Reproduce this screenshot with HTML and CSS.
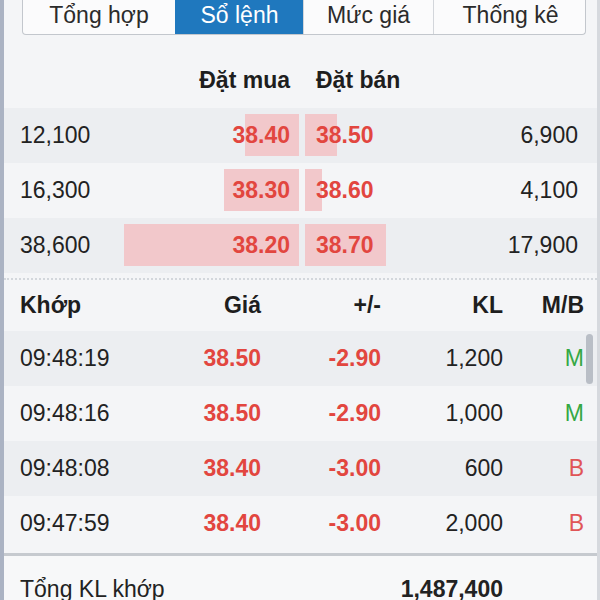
FILE: index.html
```html
<!DOCTYPE html>
<html lang="vi">
<head>
    <meta charset="UTF-8">
    <meta name="viewport" content="width=device-width, initial-scale=1.0">
    <title>Sổ lệnh</title>
    <link rel="stylesheet" href="styles.css">
</head>
<body>
    <div class="panel">
        <div class="tabs">
            <div class="tab">Tổng hợp</div>
            <div class="tab active">Sổ lệnh</div>
            <div class="tab">Mức giá</div>
            <div class="tab">Thống kê</div>
        </div>

        <div class="book">
            <div class="book-row book-head">
                <span></span>
                <span class="bid">Đặt mua</span>
                <span class="ask">Đặt bán</span>
                <span></span>
            </div>
            <div class="book-row odd">
                <span class="vol">12,100</span>
                <span class="bid bar" style="--w:54px">38.40</span>
                <span class="ask bar" style="--w:32px">38.50</span>
                <span class="vol right">6,900</span>
            </div>
            <div class="book-row">
                <span class="vol">16,300</span>
                <span class="bid bar" style="--w:75px">38.30</span>
                <span class="ask bar" style="--w:17px">38.60</span>
                <span class="vol right">4,100</span>
            </div>
            <div class="book-row odd">
                <span class="vol">38,600</span>
                <span class="bid bar" style="--w:175px">38.20</span>
                <span class="ask bar" style="--w:81px">38.70</span>
                <span class="vol right">17,900</span>
            </div>
        </div>

        <div class="trades">
            <div class="trade-row trade-head">
                <span>Khớp</span>
                <span class="right">Giá</span>
                <span class="right">+/-</span>
                <span class="right">KL</span>
                <span class="right">M/B</span>
            </div>
            <div class="trade-row odd">
                <span>09:48:19</span>
                <span class="right price">38.50</span>
                <span class="right price">-2.90</span>
                <span class="right">1,200</span>
                <span class="right buy">M</span>
            </div>
            <div class="trade-row">
                <span>09:48:16</span>
                <span class="right price">38.50</span>
                <span class="right price">-2.90</span>
                <span class="right">1,000</span>
                <span class="right buy">M</span>
            </div>
            <div class="trade-row odd">
                <span>09:48:08</span>
                <span class="right price">38.40</span>
                <span class="right price">-3.00</span>
                <span class="right">600</span>
                <span class="right sell">B</span>
            </div>
            <div class="trade-row">
                <span>09:47:59</span>
                <span class="right price">38.40</span>
                <span class="right price">-3.00</span>
                <span class="right">2,000</span>
                <span class="right sell">B</span>
            </div>
            <div class="scroll-thumb"></div>
        </div>

        <div class="total">
            <span>Tổng KL khớp</span>
            <span class="total-value">1,487,400</span>
        </div>
    </div>
</body>
</html>
```

FILE: styles.css
```css
body {
    margin: 0;
    font-family: 'Liberation Sans', Arial, sans-serif;
    color: #222;
    background: #f4f5f7;
}
.panel {
    height: 600px;
    box-sizing: border-box;
    border-left: 4px solid #abb3c3;
    border-right: 3px solid #d6d9de;
    background: #f4f5f7;
    overflow: hidden;
}

/* tabs */
.tabs {
    display: flex;
    margin: 0 11px 0 18px;
    height: 34px;
    border: 1px solid #c3c7cd;
    border-top: none;
    border-radius: 0 0 4px 4px;
    background: #fbfbfc;
    overflow: hidden;
}
.tab {
    flex: 0 0 auto;
    text-align: center;
    line-height: 31px;
    font-size: 23px;
    color: #2b2b2b;
    border-left: 1px solid #d3d6db;
}
.tab:nth-child(1) { width: 152px; border-left: none; }
.tab:nth-child(2) { width: 127px; }
.tab:nth-child(3) { width: 129px; }
.tab:nth-child(4) { width: 153px; }
.tab.active {
    background: #1f78be;
    color: white;
    border-left-color: #1f78be;
}

/* order book */
.book-row {
    display: grid;
    grid-template-columns: 104px 175px 141px 138px;
    height: 55px;
    padding: 6px 19px 7px 16px;
    box-sizing: border-box;
    font-size: 23px;
    line-height: 42px;
}
.book-row.odd {
    background: #eceef1;
}
.book-head {
    height: 73px;
    padding-top: 34px;
    padding-bottom: 16px;
    line-height: 23px;
    font-weight: bold;
    color: #1e1e1e;
}
.book-row .bid {
    text-align: right;
    padding-right: 9px;
}
.book-row .ask {
    margin-left: 6px;
    padding-left: 11px;
}
.bar {
    color: #e2463f;
    font-weight: bold;
    background-repeat: no-repeat;
    background-image: linear-gradient(#f2c8cb, #f2c8cb);
    background-size: var(--w) 100%;
}
.bid.bar {
    background-position: right top;
}
.ask.bar {
    background-position: left top;
}
.right {
    text-align: right;
}
.book {
    padding-bottom: 5px;
    border-bottom: 2px dotted #d3d7dc;
}

/* matched trades */
.trades {
    position: relative;
    padding-bottom: 2px;
}
.trade-row {
    display: grid;
    grid-template-columns: 140px 101px 120px 122px 81px;
    height: 55px;
    padding: 0 13px 0 16px;
    font-size: 23px;
    line-height: 55px;
}
.trade-row.odd {
    background: #eceef1;
}
.trade-head {
    height: 51px;
    line-height: 51px;
    font-weight: bold;
    color: #1e1e1e;
}
.price {
    color: #e2463f;
    font-weight: bold;
}
.buy {
    color: #35a845;
}
.sell {
    color: #e05557;
}
.scroll-thumb {
    position: absolute;
    right: 4px;
    top: 54px;
    width: 7px;
    height: 50px;
    border-radius: 4px;
    background: #b9bec6;
}

/* total */
.total {
    display: grid;
    grid-template-columns: 242px 241px;
    padding: 18px 0 0 16px;
    border-top: 3px solid #c6cacf;
    background: #f7f8f9;
    font-size: 23px;
    line-height: 30px;
}
.total-value {
    text-align: right;
    font-weight: bold;
}
```
